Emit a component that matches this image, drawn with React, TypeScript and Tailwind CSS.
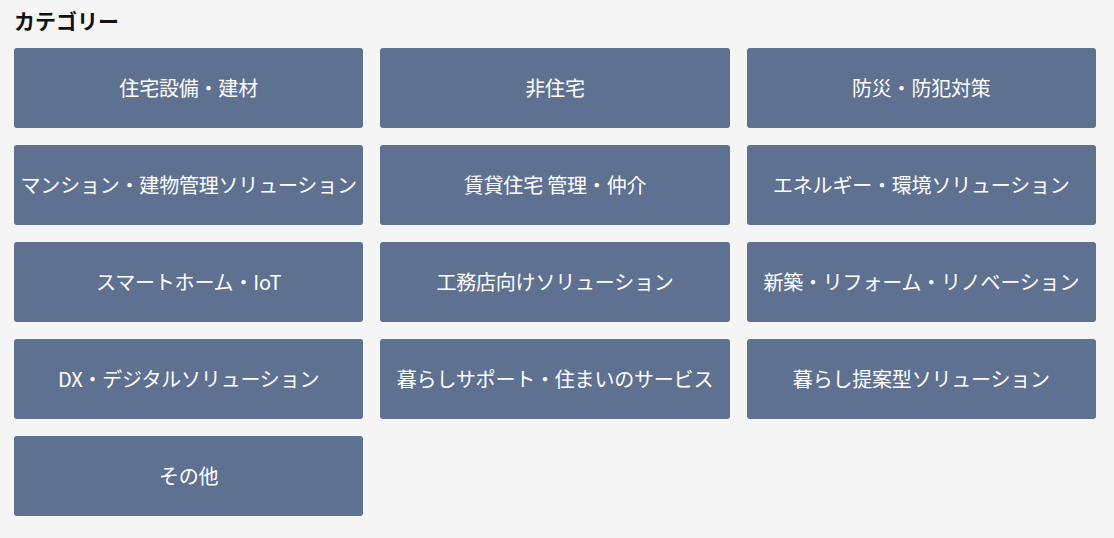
const categories = [
  '住宅設備・建材',
  '非住宅',
  '防災・防犯対策',
  'マンション・建物管理ソリューション',
  '賃貸住宅 管理・仲介',
  'エネルギー・環境ソリューション',
  'スマートホーム・IoT',
  '工務店向けソリューション',
  '新築・リフォーム・リノベーション',
  'DX・デジタルソリューション',
  '暮らしサポート・住まいのサービス',
  '暮らし提案型ソリューション',
  'その他',
];

const App = () => {
  return (
    <div className="min-h-[538px] bg-[#f5f5f5] px-[14px] pb-[21px] pr-[18px] pt-[5px] font-['Noto_Sans_CJK_JP',sans-serif]">
      <h2 className="mb-[12px] text-[21px] font-bold leading-[31px] text-[#111]">カテゴリー</h2>
      <div className="grid grid-cols-3 gap-x-[17px] gap-y-[17px]">
        {categories.map((category) => (
          <a
            key={category}
            href="#"
            className="flex h-[80px] items-center justify-center whitespace-nowrap rounded-[3px] bg-[#5f7191] text-[20px] tracking-[-0.2px] text-white"
          >
            {category}
          </a>
        ))}
      </div>
    </div>
  );
};

export default App;
